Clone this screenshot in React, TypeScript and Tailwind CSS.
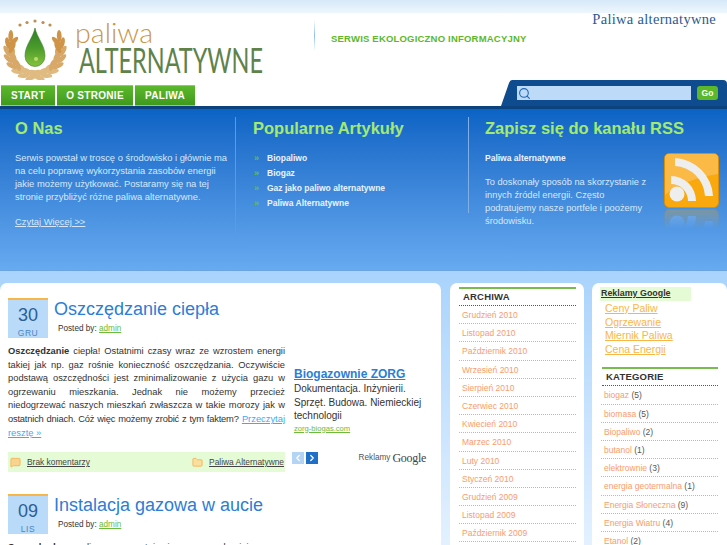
import { Search, ChevronLeft, ChevronRight, MessageSquare, Folder } from 'lucide-react';

const archives = [
  'Grudzień 2010', 'Listopad 2010', 'Październik 2010', 'Wrzesień 2010', 'Sierpień 2010', 'Czerwiec 2010',
  'Kwiecień 2010', 'Marzec 2010', 'Luty 2010', 'Styczeń 2010', 'Grudzień 2009', 'Listopad 2009', 'Październik 2009',
];

const categories = [
  ['biogaz', 5], ['biomasa', 5], ['Biopaliwo', 2], ['butanol', 1], ['elektrownie', 3], ['energia geotermalna', 1],
  ['Energia Słoneczna', 9], ['Energia Wiatru', 4], ['Etanol', 2],
] as const;

// wreath leaves, angle in degrees from the centre of the ring
const leafAngles = [82, 66, 50, 34, 18, 2, -14, -30];

function Leaf({ angle, r, tilt, fill }: { angle: number; r: number; tilt: number; fill: string }) {
  const rad = (angle * Math.PI) / 180;
  const dx = r * Math.cos(rad);
  const y = 37 + r * Math.sin(rad);
  return (
    <>
      <ellipse cx={35 + dx} cy={y} rx="2.4" ry="6" fill={fill} transform={`rotate(${angle + tilt} ${35 + dx} ${y})`} />
      <ellipse cx={35 - dx} cy={y} rx="2.4" ry="6" fill={fill} transform={`rotate(${-(angle + tilt)} ${35 - dx} ${y})`} />
    </>
  );
}

function Logo() {
  return (
    <svg width="265" height="67" viewBox="0 0 265 67" className="block">
      <defs>
        <linearGradient id="drop" x1="0" y1="0" x2="0" y2="1">
          <stop offset="0" stopColor="#2f7d2a" />
          <stop offset="0.5" stopColor="#4a9a2a" />
          <stop offset="1" stopColor="#86c23c" />
        </linearGradient>
      </defs>
      {leafAngles.map((a) => {
        const fill = a > 40 ? '#dfbb82' : a > 0 ? '#d8a868' : '#cf9448';
        return (
          <g key={a}>
            <Leaf angle={a} r={28} tilt={28} fill={fill} />
            <Leaf angle={a + 8} r={23} tilt={-22} fill={fill} />
          </g>
        );
      })}
      <path d="M35 15 C37 25 45 32 45 43 A10 10.5 0 0 1 25 43 C25 32 33 25 35 15 Z" fill="url(#drop)" stroke="#3e7f2c" strokeWidth="0.6" />
      <circle cx="36" cy="46" r="2" fill="#b7dc6a" />
      {[[20, 12], [27, 9.5], [35, 8], [43, 9.5], [50, 12]].map(([x, y]) => (
        <circle key={x} cx={x} cy={y} r="1.6" fill="#b98f55" />
      ))}
      <text x="75" y="30" fontFamily="Lato, sans-serif" fontWeight="300" fontSize="28" fill="#c8974c" textLength="78" lengthAdjust="spacingAndGlyphs">paliwa</text>
      <text x="79" y="60" fontFamily="Lato, sans-serif" fontWeight="400" fontSize="35" fill="#5f8249" textLength="184" lengthAdjust="spacingAndGlyphs">ALTERNATYWNE</text>
    </svg>
  );
}

function RssIcon() {
  const body = (
    <>
      <rect x="0.5" y="0.5" width="54" height="54" rx="5" fill="#f9a80e" stroke="#e08e00" />
      <path d="M1 5 a4 4 0 0 1 4-4 h45 a4 4 0 0 1 4 4 v16 C35 24 15 30 1 42 Z" fill="#fbb946" />
      <circle cx="13" cy="41" r="7.5" fill="#eee" />
      <path d="M7 23 A25 25 0 0 1 32 48 H24 A17 17 0 0 0 7 31 Z" fill="#eee" />
      <path d="M11 5 A40 40 0 0 1 49 43 H41 A32 32 0 0 0 11 13 Z" fill="#eee" />
    </>
  );
  return (
    <div className="w-[55px] shrink-0">
      <svg width="55" height="55" viewBox="0 0 55 55" className="block">{body}</svg>
      <div className="h-[20px] mt-[1px] overflow-hidden opacity-30 [mask-image:linear-gradient(to_bottom,black,transparent)]">
        <svg width="55" height="55" viewBox="0 0 55 55" className="block -scale-y-100">{body}</svg>
      </div>
    </div>
  );
}

function DateBox({ day, month }: { day: string; month: string }) {
  return (
    <div className="w-[40px] h-[40px] shrink-0 bg-[#b9daf9] border-t-[2px] border-[#f9b646] flex flex-col items-center text-[#2a5f98]">
      <span className="text-[18px] leading-[22px] mt-[4px]">{day}</span>
      <span className="text-[8.5px] leading-[10px] mt-[2px] tracking-[0.5px] text-[#4a86c4]">{month}</span>
    </div>
  );
}

function PostHead({ day, month, title }: { day: string; month: string; title: string }) {
  return (
    <div className="flex">
      <DateBox day={day} month={month} />
      <div className="ml-[6px]">
        <h2 className="text-[18px] leading-[24px] text-[#2c7dd6] -mt-[1px]">{title}</h2>
        <p className="ml-[4px] mt-[2px] text-[8.2px] leading-[12px] text-[#333]">
          Posted by: <span className="text-[#6dbb3c] underline">admin</span>
        </p>
      </div>
    </div>
  );
}

function SideHeading({ children }: { children: string }) {
  return (
    <div className="border-t-[2px] border-[#76bd4e]">
      <h3 className="h-[17px] pl-[4px] text-[9.5px] leading-[15px] font-bold tracking-[0.2px] text-[#333] border-b border-dotted border-[#555]">{children}</h3>
    </div>
  );
}

export default function App() {
  return (
    <div className="w-[727px] h-[545px] overflow-hidden font-['Liberation_Sans',sans-serif] bg-white">
      <div className="h-[13px] bg-gradient-to-b from-[#d6e9f9] to-[#eef6fd]" />

      {/* Header */}
      <div className="h-[67px] flex items-start relative">
        <Logo />
        <div className="ml-[49px] mt-[7px] w-[1px] h-[31px] bg-gradient-to-b from-transparent via-[#8fc0ea] to-transparent" />
        <p className="ml-[16px] mt-[20px] text-[9.5px] leading-[12px] font-bold tracking-[0.2px] text-[#5cb82a]">SERWIS EKOLOGICZNO INFORMACYJNY</p>
        <p className="absolute right-[11px] top-[-2px] font-['Liberation_Serif',serif] text-[14.5px] leading-[16px] tracking-[0.3px] text-[#2a5a92]">Paliwa alternatywne</p>
      </div>

      {/* Nav */}
      <div className="h-[26px] flex items-end justify-between">
        <div className="flex gap-[2px] pl-[1px]">
          {['START', 'O STRONIE', 'PALIWA'].map((label, i) => (
            <a key={label} className={`h-[21px] flex items-center justify-center bg-gradient-to-b from-[#5cb82c] to-[#3f9a1e] border-t border-b border-[#f3a81e] text-white font-bold text-[10px] tracking-[0.3px] ${i === 0 ? 'w-[54px]' : i === 1 ? 'w-[76px]' : 'w-[60px]'}`}>
              {label}
            </a>
          ))}
        </div>
        <div className="flex h-[26px]">
          <svg width="11" height="26" viewBox="0 0 11 26" className="block"><path d="M0 26 L8 3 Q9 0 11 0 V26 Z" fill="#0e4b8f" /></svg>
          <div className="w-[215px] rounded-tr-[4px] bg-[#0e4b8f] flex items-start pt-[6px] pl-[5px]">
            <div className="w-[174px] h-[14px] bg-[#bddbf8] flex items-center pl-[1px]">
              <Search className="w-[13px] h-[13px] text-[#1f66b5]" strokeWidth={2} />
            </div>
            <button className="ml-[6px] w-[21px] h-[14px] rounded-[3px] bg-[#5cb82a] text-white text-[8.5px] font-bold leading-[14px]">Go</button>
          </div>
        </div>
      </div>
      <div className="h-[3px] bg-[#0c437f]" />

      {/* Blue panel */}
      <div className="h-[162px] flex bg-gradient-to-b from-[#0a63c4] to-[#66aaf0] border-b border-[#6ba3df]">
        <div className="w-[235px] shrink-0 pl-[15px] pr-[5px] pt-[9px]">
          <h2 className="text-[16.5px] leading-[20px] font-bold text-[#a2ea72]">O Nas</h2>
          <p className="mt-[13px] text-[9.4px] leading-[13px] text-[#d7e8fa]">
            Serwis powstał w troscę o środowisko i głównie ma na celu poprawę wykorzystania zasobów energii jakie możemy użytkować. Postaramy się na tej stronie przybliżyć różne paliwa alternatywne.
          </p>
          <a className="block mt-[12px] text-[9.4px] leading-[13px] text-[#d7e8fa] underline">Czytaj Więcej &gt;&gt;</a>
        </div>
        <div className="w-[1px] mt-[8px] h-[122px] bg-[#5c9be0]" />
        <div className="w-[232px] shrink-0 pl-[17px] pt-[9px]">
          <h2 className="text-[16.5px] leading-[20px] font-bold text-[#a2ea72]">Popularne Artykuły</h2>
          <ul className="mt-[13px] flex flex-col">
            {['Biopaliwo', 'Biogaz', 'Gaz jako paliwo alternatywne', 'Paliwa Alternatywne'].map((item) => (
              <li key={item} className="h-[15px] flex items-center text-[8.5px] font-bold text-[#eaf3fd]">
                <span className="w-[14px] pl-[1px] text-[#5fc04a] text-[9px] leading-[9px]">»</span>
                {item}
              </li>
            ))}
          </ul>
        </div>
        <div className="w-[1px] mt-[8px] h-[96px] bg-[#7fb0e6]" />
        <div className="flex-1 pl-[16px] pt-[9px] relative">
          <h2 className="text-[16.5px] leading-[20px] font-bold text-[#a2ea72]">Zapisz się do kanału RSS</h2>
          <div className="flex">
            <div className="w-[170px]">
              <p className="mt-[14px] text-[8.5px] leading-[13px] font-bold text-[#eaf3fd]">Paliwa alternatywne</p>
              <p className="mt-[11px] text-[9.3px] leading-[13px] text-[#d7e8fa]">
                To doskonały sposób na skorzystanie z innych źródel energii. Często podratujemy nasze portfele i poożemy środowisku.
              </p>
            </div>
            <div className="ml-[9px] mt-[15px]"><RssIcon /></div>
          </div>
        </div>
      </div>

      {/* Content */}
      <div className="h-[274px] bg-gradient-to-b from-[#a9d3fc] to-[#e3f1ff] pt-[12px] flex items-start">
        <main className="w-[441px] h-[300px] shrink-0 bg-white rounded-t-[7px] flex pl-[8px] pt-[15px]">
          <div className="w-[277px] shrink-0">
            <PostHead day="30" month="GRU" title="Oszczędzanie ciepła" />
            <p className="mt-[7px] text-[9.35px] leading-[13.6px] text-justify text-[#333]">
              <b>Oszczędzanie</b> ciepła! Ostatnimi czasy wraz ze wzrostem energii takiej jak np. gaz rośnie konieczność oszczędzania. Oczywiście podstawą oszczędności jest zminimalizowanie z użycia gazu w ogrzewaniu mieszkania. Jednak nie możemy przecież niedogrzewać naszych mieszkań zwłaszcza w takie morozy jak w <span className="tracking-[-0.2px]">ostatnich dniach. Cóż więc możemy zrobić z tym faktem?</span> <a className="text-[#3fa9f5] underline">Przeczytaj resztę »</a>
            </p>
            <div className="mt-[12px] h-[20px] bg-[#e4fbd6] flex items-center justify-between text-[8.4px] text-[#444] pr-[1px]">
              <span className="flex items-center">
                <MessageSquare className="w-[11px] h-[11px] ml-[2px] text-[#f3b65a] fill-[#f9d48e]" />
                <a className="ml-[6px] underline">Brak komentarzy</a>
              </span>
              <span className="flex items-center">
                <Folder className="w-[11px] h-[11px] text-[#f3b65a] fill-[#fbdf9f]" />
                <a className="ml-[6px] underline">Paliwa Alternatywne</a>
              </span>
            </div>
            <div className="mt-[22px]">
              <PostHead day="09" month="LIS" title="Instalacja gazowa w aucie" />
              <p className="mt-[7px] text-[9.35px] leading-[13.6px] text-[#333]"><b>Samochody</b> na paliwa gazowe stają się coraz popularniejsze</p>
            </div>
          </div>
          <aside className="w-[134px] ml-[7px] flex flex-col">
            <a className="mt-[69px] pl-[2px] text-[12px] leading-[14px] font-bold text-[#2c7dd6] underline">Biogazownie ZORG</a>
            <p className="pl-[2px] mt-[1px] text-[10px] leading-[13.6px] text-[#333]">Dokumentacja. Inżynierii. Sprzęt. Budowa. Niemieckiej technologii</p>
            <a className="pl-[2px] text-[7.6px] leading-[9px] mt-[1px] text-[#6dbb3c] underline">zorg-biogas.com</a>
            <div className="mt-[18px] flex items-center justify-between">
              <div className="flex gap-[2px]">
                <span className="w-[12px] h-[12px] bg-[#b3d4f5] flex items-center justify-center"><ChevronLeft className="w-[10px] h-[10px] text-white" strokeWidth={3} /></span>
                <span className="w-[12px] h-[12px] bg-[#1f6fc9] flex items-center justify-center"><ChevronRight className="w-[10px] h-[10px] text-white" strokeWidth={3} /></span>
              </div>
              <span className="flex items-center gap-[2px] text-[8.2px] text-[#555]">
                Reklamy <span className="font-['Liberation_Serif',serif] text-[12px] leading-[14px] tracking-[-0.3px] text-[#444]">Google</span>
              </span>
            </div>
          </aside>
        </main>

        <section className="w-[134px] h-[300px] shrink-0 ml-[9px] bg-white rounded-t-[7px] pt-[4px] pl-[9px] pr-[8px]">
          <SideHeading>ARCHIWA</SideHeading>
          <ul>
            {archives.map((a) => (
              <li key={a} className="h-[18.2px] pl-[3px] text-[8.5px] leading-[18px] text-[#fa9c6b] border-b border-dotted border-[#9ed47e]">{a}</li>
            ))}
          </ul>
        </section>

        <section className="w-[135px] h-[300px] shrink-0 ml-[8px] bg-white rounded-t-[7px] pt-[4px] pl-[8px] pr-[9px]">
          <div className="w-[91px] h-[14px] bg-[#e4fbd6] pl-[1px] text-[8.9px] leading-[13px] font-bold text-[#333] underline">Reklamy Google</div>
          <ul className="pl-[5px]">
            {['Ceny Paliw', 'Ogrzewanie', 'Miernik Paliwa', 'Cena Energii'].map((l) => (
              <li key={l} className="h-[13.6px] text-[10.5px] leading-[14px] text-[#f9b646] underline">{l}</li>
            ))}
          </ul>
          <div className="mt-[12px] ml-[2px]">
            <SideHeading>KATEGORIE</SideHeading>
          </div>
          <ul>
            {categories.map(([name, n]) => (
              <li key={name} className="h-[18.2px] pl-[3px] ml-[1px] text-[8.5px] leading-[18px] text-[#555] border-b border-dotted border-[#9ed47e]">
                <span className="text-[#fa9c6b]">{name}</span> ({n})
              </li>
            ))}
          </ul>
        </section>
      </div>
    </div>
  );
}
